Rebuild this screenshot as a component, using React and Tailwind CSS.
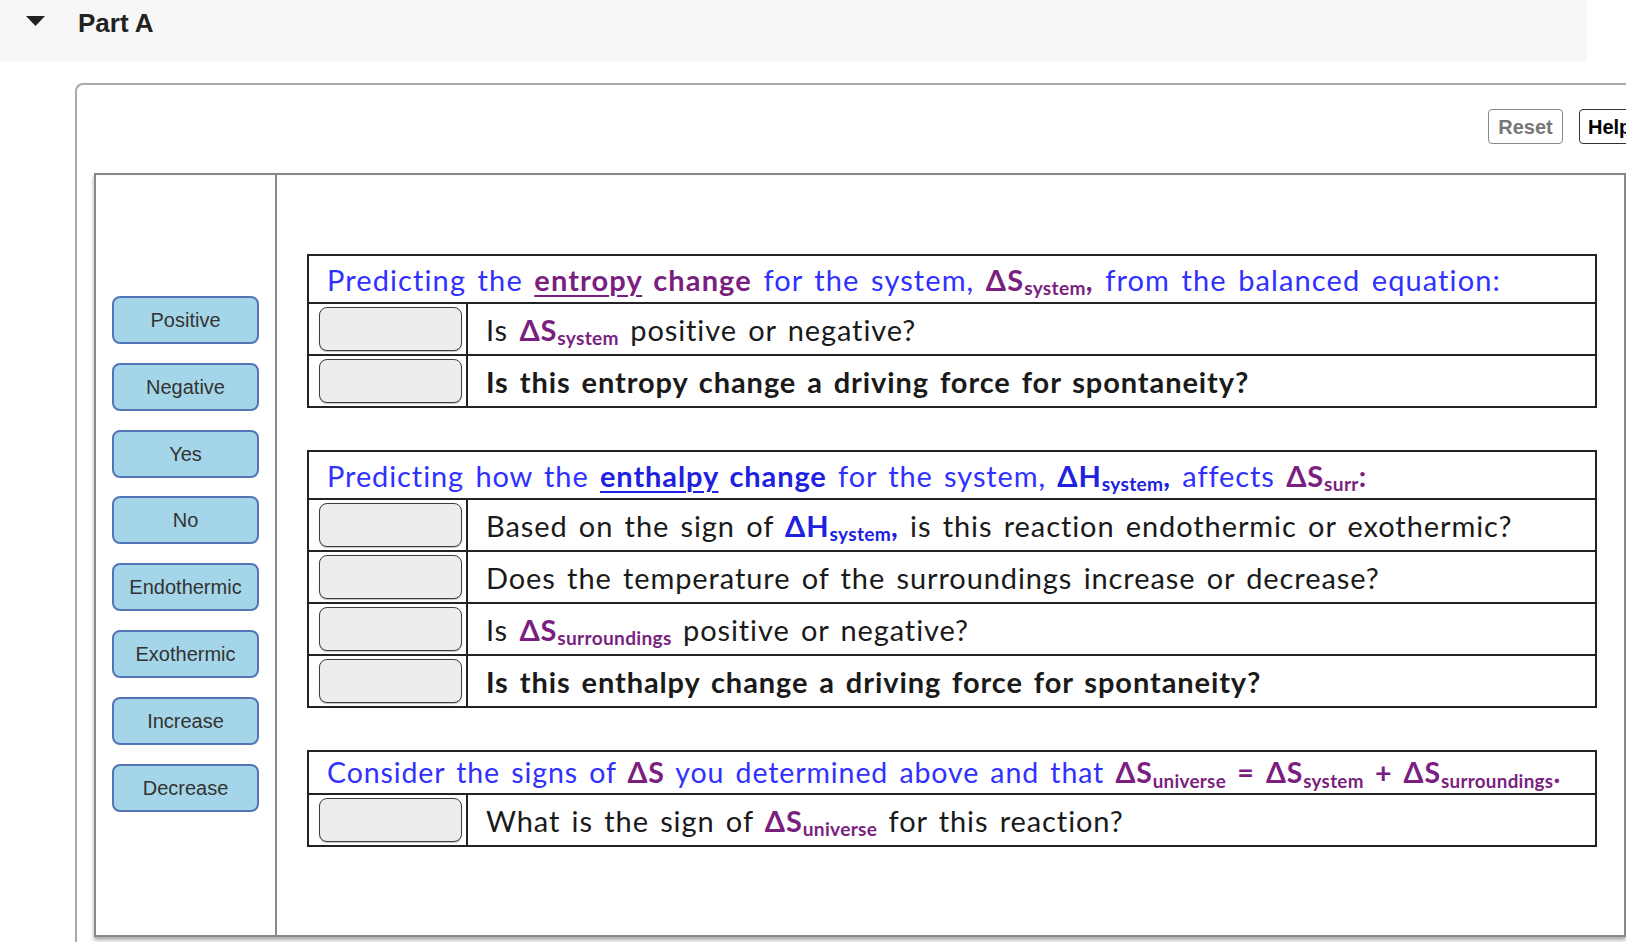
import React from "react";

const choices = [
  "Positive",
  "Negative",
  "Yes",
  "No",
  "Endothermic",
  "Exothermic",
  "Increase",
  "Decrease",
];

// ΔX with a subscript, bold, coloured
const Delta = ({ sym, sub, tail, color }) => (
  <span className={`font-bold ${color}`}>
    Δ{sym}
    {sub && <sub className="text-[0.66em] font-bold tracking-[0.3px]">{sub}</sub>}
    {tail}
  </span>
);

const Slot = () => (
  <div className="w-[159px] shrink-0 self-stretch border-r-2 border-[#222] flex items-center pl-[10px]">
    <div className="w-[143px] h-[44px] rounded-[8px] border-[1.5px] border-[#3a3d48] bg-[#eceeee] shadow-[0_1px_1px_rgba(0,0,0,0.25)]" />
  </div>
);

const Row = ({ children, bold }) => (
  <div className="flex h-[52px] border-t-2 border-[#222]">
    <Slot />
    <div
      className={`flex items-center pl-[18px] text-[#1a1a1a] whitespace-nowrap ${
        bold ? "font-bold" : ""
      }`}
    >
      <span>{children}</span>
    </div>
  </div>
);

const QTable = ({ header, headerHeight, headerSize, children }) => (
  <div className="w-[1290px] border-2 border-[#222] bg-white">
    <div
      className={`flex items-center pl-[18px] text-[#3030ff] whitespace-nowrap ${headerHeight} ${headerSize}`}
    >
      <span>{header}</span>
    </div>
    {children}
  </div>
);

const purple = "text-[#7a1f80]";
const blue = "text-[#2020e0]";

export default function App() {
  return (
    <div className="w-[1626px] h-[942px] overflow-hidden bg-white font-['Liberation_Sans',Arial,sans-serif]">
      {/* part header */}
      <div className="w-[1587px] h-[61px] bg-[#f7f7f7] flex items-start pt-[10px]">
        <svg width="19" height="10" viewBox="0 0 19 10" className="ml-[26px] mt-[6px]">
          <polygon points="0,0 19,0 9.5,10" fill="#222" />
        </svg>
        <span className="ml-[33px] text-[26px] leading-[26px] font-bold text-[#222]">Part A</span>
      </div>

      <div className="ml-[75px] mt-[22px] w-[1600px] h-[900px] border-l-2 border-t-2 border-[#aaa] rounded-tl-[8px]">
        <div className="flex mt-[24px] ml-[1411px]">
          <button className="w-[75px] h-[35px] rounded-[4px] border-[1.5px] border-[#888] bg-white text-[20px] font-bold text-[#777]">
            Reset
          </button>
          <button className="ml-[16px] w-[64px] h-[35px] rounded-[4px] border-[1.5px] border-[#333] bg-white text-[20px] font-bold text-black text-left pl-[8px]">
            Help
          </button>
        </div>

        <div className="ml-[17px] mt-[29px] w-[1532px] h-[764px] border-2 border-[#888] flex shadow-[0_3px_4px_rgba(0,0,0,0.35)]">
          {/* answer choices */}
          <div className="w-[181px] shrink-0 border-r-2 border-[#888] pl-[16px] pt-[121px] flex flex-col gap-[18.8px]">
            {choices.map((c) => (
              <div
                key={c}
                className="w-[147px] h-[48px] rounded-[8px] border-2 border-[#5375b8] bg-[#a5d5e8] flex items-center justify-center text-[20px] text-[#333]"
              >
                {c}
              </div>
            ))}
          </div>

          {/* tables */}
          <div className="pl-[30px] pt-[79px] flex flex-col gap-[42px] font-['Lato',sans-serif] text-[29px] leading-none tracking-[0.9px] [word-spacing:3px]">
            <QTable
              headerHeight="h-[46px]"
              headerSize="text-[29px] tracking-[1.1px]"
              header={
                <>
                  Predicting the{" "}
                  <span className={`font-bold ${purple}`}>
                    <span className="underline decoration-2 underline-offset-4">entropy</span> change
                  </span>{" "}
                  for the system, <Delta sym="S" sub="system" tail="," color={purple} /> from the
                  balanced equation:
                </>
              }
            >
              <Row>
                Is <Delta sym="S" sub="system" color={purple} /> positive or negative?
              </Row>
              <Row bold>Is this entropy change a driving force for spontaneity?</Row>
            </QTable>

            <QTable
              headerHeight="h-[46px]"
              headerSize="text-[29px]"
              header={
                <>
                  Predicting how the{" "}
                  <span className={`font-bold ${blue}`}>
                    <span className="underline decoration-2 underline-offset-4">enthalpy</span> change
                  </span>{" "}
                  for the system, <Delta sym="H" sub="system" tail="," color={blue} /> affects{" "}
                  <Delta sym="S" sub="surr" tail=":" color={purple} />
                </>
              }
            >
              <Row>
                Based on the sign of <Delta sym="H" sub="system" tail="," color={blue} /> is this
                reaction endothermic or exothermic?
              </Row>
              <Row>Does the temperature of the surroundings increase or decrease?</Row>
              <Row>
                Is <Delta sym="S" sub="surroundings" color={purple} /> positive or negative?
              </Row>
              <Row bold>Is this enthalpy change a driving force for spontaneity?</Row>
            </QTable>

            <QTable
              headerHeight="h-[41px]"
              headerSize="text-[28.5px]"
              header={
                <>
                  Consider the signs of <Delta sym="S" color={purple} /> you determined above and
                  that <Delta sym="S" sub="universe" color={purple} />{" "}
                  <span className={`font-bold ${purple}`}>=</span>{" "}
                  <Delta sym="S" sub="system" color={purple} />{" "}
                  <span className={`font-bold ${purple}`}>+</span>{" "}
                  <Delta sym="S" sub="surroundings" tail="." color={purple} />
                </>
              }
            >
              <Row>
                What is the sign of <Delta sym="S" sub="universe" color={purple} /> for this
                reaction?
              </Row>
            </QTable>
          </div>
        </div>
      </div>
    </div>
  );
}
